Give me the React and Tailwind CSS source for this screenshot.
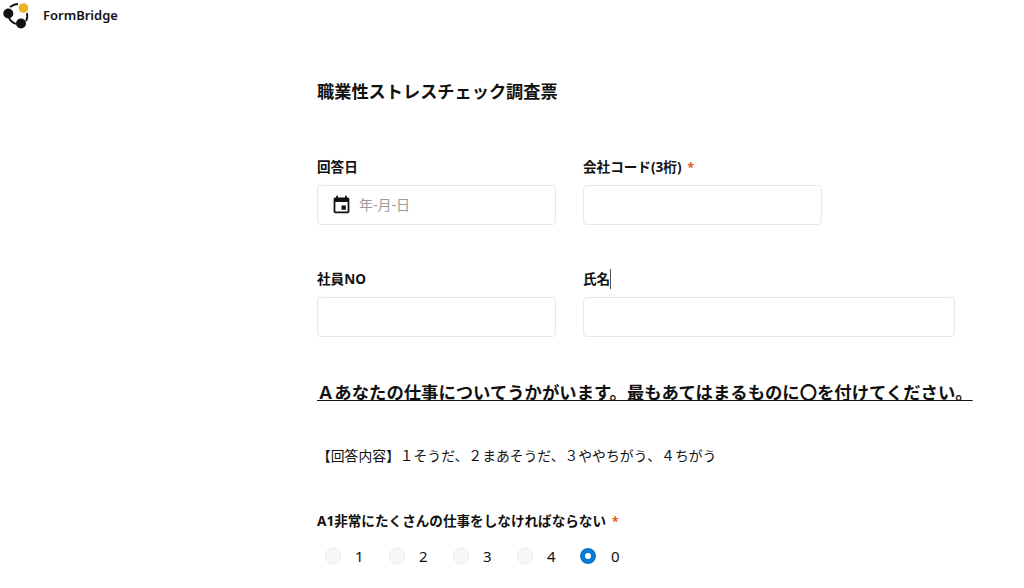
const font = { fontFamily: '"Noto Sans", "Noto Sans CJK JP", sans-serif' };

const Required = () => <span className="ml-[6px] text-[#e8590c] text-[12px]">*</span>;

const Field = ({ label, required, caret, className = "", children }) => (
  <div className={className}>
    <div className="h-[20px] flex items-center text-[13.6px] leading-[20px] font-bold text-[#111]">
      <span className="whitespace-pre">
        {label}
        {required && <Required />}
      </span>
      {caret && <span className="w-px h-[20px] bg-[#555]" />}
    </div>
    <div className="mt-[8px] h-[40px] rounded-[4px] border border-[#e8e8e8] bg-white flex items-center">
      {children}
    </div>
  </div>
);

const Logo = () => (
  <svg width="28" height="28" viewBox="0 0 28 28">
    <path
      d="M9 6 Q13 3 17 3 M26 12 Q27 17 25 20 M8 17 Q10 21 15 23"
      fill="none"
      stroke="#111"
      strokeWidth="1.8"
    />
    <circle cx="22.500" cy="7" r="4.800" fill="#ecb125" />
    <circle cx="7.300" cy="12.500" r="5" fill="#111" />
    <circle cx="20" cy="22.500" r="5" fill="#111" />
  </svg>
);

const options = ["1", "2", "3", "4", "0"];

export default function App() {
  return (
    <div style={font} className="w-[1024px] h-[588px] overflow-hidden bg-white text-[#111]">
      <header className="h-[30px] pl-[1px] flex items-center">
        <Logo />
        <span className="ml-[14px] mt-[1px] text-[13px] font-semibold">FormBridge</span>
      </header>

      <main className="ml-[317px] w-[655px]">
        <h1 className="mt-[49px] h-[26px] text-[17.2px] leading-[26px] font-bold">職業性ストレスチェック調査票</h1>

        <div className="mt-[52px] flex gap-[27px]">
          <Field label="回答日" className="w-[239px]">
            <svg className="ml-[13px] mb-[1px]" width="21" height="21" viewBox="0 0 24 24" fill="#111">
              <path d="M19 4h-1V2h-2v2H8V2H6v2H5c-1.100 0-2 .9-2 2v14c0 1.100.9 2 2 2h14c1.100 0 2-.9 2-2V6c0-1.100-.9-2-2-2zm0 16H5V9h14v11zM12 13h5v5h-5z" />
            </svg>
            <span className="ml-[7px] mb-[2px] text-[14px] text-[#9a9a9a]">年-月-日</span>
          </Field>
          <Field label="会社コード(3桁)" required className="w-[239px]" />
        </div>

        <div className="mt-[44px] flex gap-[27px]">
          <Field label="社員NO" className="w-[239px]" />
          <Field label="氏名" caret className="w-[372px]" />
        </div>

        <h2 className="mt-[42px] h-[26px] text-[17.35px] leading-[26px] font-bold underline whitespace-nowrap">
          Ａあなたの仕事についてうかがいます。最もあてはまるものに〇を付けてください。
        </h2>

        <p className="mt-[41px] h-[20px] text-[13.8px] leading-[20px] whitespace-nowrap">
          【回答内容】１そうだ、２まあそうだ、３ややちがう、４ちがう
        </p>

        <div className="mt-[45px] h-[20px] text-[13.6px] leading-[20px] font-bold">
          A1非常にたくさんの仕事をしなければならない
          <Required />
        </div>

        <div className="mt-[17px] ml-[8px] flex gap-[32px]">
          {options.map((o) => (
            <label key={o} className="flex items-center w-[32px]">
              <span
                className={
                  o === "0"
                    ? "w-[16px] h-[16px] -ml-[1px] mr-[1px] shrink-0 rounded-full border-[5px] border-[#0a7bd1] bg-white"
                    : "w-[16px] h-[16px] shrink-0 rounded-full border border-[#e8e8e8] bg-[#f7f7f7]"
                }
              />
              <span className="ml-[14px] text-[15px] leading-[16px]">{o}</span>
            </label>
          ))}
        </div>
      </main>
    </div>
  );
}
